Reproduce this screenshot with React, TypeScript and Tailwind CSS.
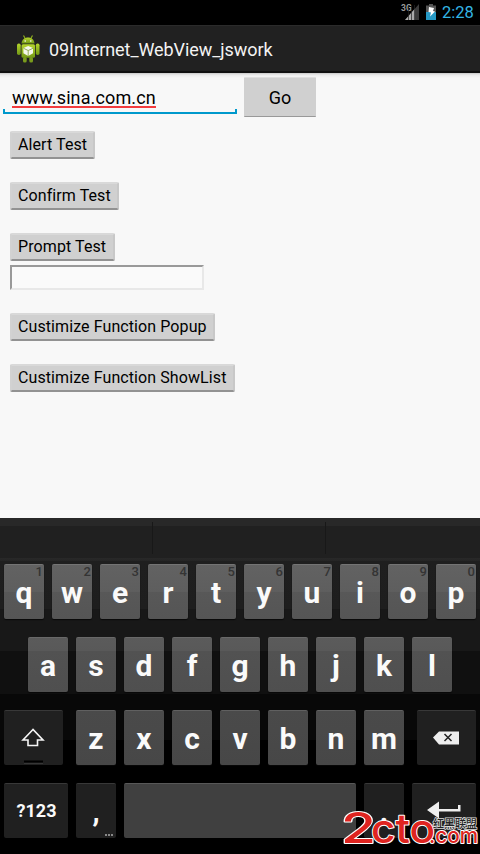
import React from "react";

type KeyProps = { label: string; hint?: string; tone: string };

const ROW1 = "bg-[linear-gradient(#626262,#5e5e5e_27px,#585858_27px,#555555)] border-t-[#747474]";
const ROW2 = "bg-[linear-gradient(#5b5b5b,#595959_13px,#525252_13px,#4f4f4f)] border-t-[#696969]";
const ROW3 = "bg-[linear-gradient(#4a4a4a,#474747)] border-t-[#606060]";

function Key({ label, hint, tone }: KeyProps) {
  return (
    <div className={`relative h-[55px] w-10 shrink-0 rounded-[2px] border-t shadow-[0_1px_1px_#080808] ${tone}`}>
      <div className="pt-[10px] text-center text-[30px] leading-[36px] font-bold text-[#fafafa]">{label}</div>
      {hint && <span className="absolute top-0 right-[1px] text-[13px] leading-[14px] font-medium text-[#343434]">{hint}</span>}
    </div>
  );
}

const dark = "relative h-[55px] shrink-0 rounded-[2px] border-t border-t-[#383838] bg-[#202020]";

function WebButton({ label, width }: { label: string; width: string }) {
  return (
    <button
      className={`block h-7 rounded-[2px] border-2 border-t-[#d9d9d9] border-r-[#c8c8c8] border-b-[#929292] border-l-[#d2d2d2] bg-[#d0d0d0] pb-px pl-[6px] text-left text-[16px] leading-[21px] tracking-[0.09px] whitespace-nowrap text-black ${width}`}
    >
      {label}
    </button>
  );
}

function AndroidIcon() {
  return (
    <svg className="ml-4 h-[30px] w-6" viewBox="0 0 24 30">
      <defs>
        <linearGradient id="robot" x1="0" y1="0" x2="0" y2="1">
          <stop offset="0" stopColor="#b6d62c" />
          <stop offset="1" stopColor="#719716" />
        </linearGradient>
      </defs>
      <path d="M7.500 1.500 9.500 5M16.500 1.500 14.500 5" stroke="#8dac20" strokeWidth="1.200" />
      <path d="M5.500 9.500C6 1.500 18 1.500 18.500 9.500Z" fill="url(#robot)" />
      <rect x="5.500" y="10.300" width="13.500" height="13.500" rx="1.500" fill="url(#robot)" />
      <rect x="1" y="9.500" width="3.700" height="11.500" rx="1.700" fill="url(#robot)" />
      <rect x="19.800" y="9.500" width="3.700" height="11.500" rx="1.700" fill="url(#robot)" />
      <rect x="7" y="23" width="3.700" height="5.500" rx="1.500" fill="#799b1c" />
      <rect x="13.300" y="23" width="3.700" height="5.500" rx="1.500" fill="#799b1c" />
      <circle cx="9.200" cy="7" r=".8" fill="#fff" />
      <circle cx="14.800" cy="7" r=".8" fill="#fff" />
      <path d="m12.200 12 4.800 2v5.200L12.200 22l-4.800-2.800V14Z" fill="#f5f7ec" />
      <path d="m7.500 14.300 4.700 2.200 4.800-2.200M12.200 16.500V22" fill="none" stroke="#7d9a35" strokeWidth=".8" />
    </svg>
  );
}

function Watermark() {
  return (
    <svg className="absolute top-[794px] left-[330px] h-[60px] w-[150px]" viewBox="-8 -10 150 60">
      <g fontFamily="Inter, sans-serif" fill="#df2420" stroke="#fff" strokeWidth="2" paintOrder="stroke" strokeLinejoin="round">
        <text x="3" y="39" fontSize="43" fontWeight="500" textLength="35" lengthAdjust="spacingAndGlyphs">2</text>
        <text x="33" y="39" fontSize="40" fontWeight="500" textLength="64" lengthAdjust="spacingAndGlyphs">cto</text>
        <text x="91" y="39" fontSize="21" fontWeight="500" textLength="49" lengthAdjust="spacingAndGlyphs">.com</text>
      </g>
      <text x="95" y="24" fontFamily="'Noto Sans CJK TC', sans-serif" fontSize="11" fontWeight="500" fill="#222" stroke="#ddd" strokeWidth="1.500" paintOrder="stroke" textLength="44">红黑联盟</text>
    </svg>
  );
}

export default function App() {
  return (
    <div className="relative flex h-[854px] w-[480px] flex-col overflow-hidden bg-[#f8f8f8] font-[Roboto,sans-serif]">
      <div className="flex h-[25px] items-start justify-end bg-black text-[#33b5e5]">
        <svg className="h-[25px] w-10" viewBox="0 0 40 25">
          <text x="1" y="11" fontFamily="Roboto" fontSize="8.500" fontWeight="700" fill="#999">3G</text>
          <path d="M5 20 19 4V20Z" fill="#3b3b3b" />
          <path d="M5 20 15 8.600V20Z" fill="#aaa" />
          <path d="M8.500 5v15M11.500 5v15M14.500 5v15" stroke="#222" strokeWidth=".7" />
          <path d="M29 4h4v1.500h3V20H26V5.500h3Z" fill="#555" />
          <path d="M26 12h10v8H26Z" fill="#2799c5" />
          <path d="m29 7 5 1-1 3 2 .5-5 5 1-4-2.500-.5Z" fill="#fff" />
        </svg>
        <span className="mr-[6px] ml-[2px] w-8 text-[16.500px] leading-[25px] whitespace-nowrap">2:28</span>
      </div>

      <header className="flex h-12 items-center border-t border-b-2 border-t-[#2b2b2b] border-b-[#101010] bg-[#212121]">
        <AndroidIcon />
        <h1 className="ml-[9px] pt-[3px] text-[18px] leading-6 font-normal tracking-[-0.06px] whitespace-nowrap text-[#f3f3f3]">09Internet_WebView_jswork</h1>
      </header>

      <div className="flex h-[45px] bg-[linear-gradient(#c8c8c8,#ececec_2px,#f8f8f8_5px)]">
        <div className="mt-1 ml-[3px] flex h-[37px] w-[234px] flex-col justify-end">
          <div className="ml-[9px] h-[23px] w-36 border-b-2 border-[#f33b3e] text-[18px] leading-[25px] tracking-[0.12px] whitespace-nowrap text-black">www.sina.com.cn</div>
          <div className="mt-px h-[5px] border-x-2 border-b-2 border-[#0099cc]" />
        </div>
        <button className="mt-[4px] ml-[7px] h-10 w-[72px] rounded-[1px] border-t border-b border-t-[#dedede] border-b-[#999] bg-[#d0d0d0] text-[18px] text-black">Go</button>
      </div>

      <main className="flex h-[400px] flex-col items-start pt-[13px] pl-[10px]">
        <WebButton label="Alert Test" width="w-[85px]" />
        <div className="mt-[23px]"><WebButton label="Confirm Test" width="w-[109px]" /></div>
        <div className="mt-[23px]"><WebButton label="Prompt Test" width="w-[105px]" /></div>
        <input aria-label="Prompt result" className="mt-[4px] block h-[25px] w-[194px] border-2 border-t-[#999] border-r-[#e8e8e8] border-b-[#e8e8e8] border-l-[#999] bg-[#fafafa]" />
        <div className="mt-[23px]"><WebButton label="Custimize Function Popup" width="w-[205px]" /></div>
        <div className="mt-[23px]"><WebButton label="Custimize Function ShowList" width="w-[225px]" /></div>
      </main>

      <section className="h-[336px] shrink-0 bg-[linear-gradient(#282828_8px,#202020_8px,#202020_40px,#282828_40px,#252525_43px,#1f1f1f_43px,#1e1e1e_91px,#181818_91px,#181818_133px,#101010_133px,#101010_176px,#080808_176px,#080808_222px,#000_222px)]">
        <div className="flex h-[46px] pt-1">
          <div className="h-8 w-[153px] border-r border-[#181818]" />
          <div className="h-8 w-[173px] border-r border-[#181818]" />
        </div>
        <div className="flex h-[73px] gap-2 pl-1">
          {"qwertyuiop".split("").map((c, i) => <Key key={c} label={c} hint={String((i + 1) % 10)} tone={ROW1} />)}
        </div>
        <div className="flex h-[73px] gap-2 pl-7">
          {"asdfghjkl".split("").map((c) => <Key key={c} label={c} tone={ROW2} />)}
        </div>
        <div className="flex h-[73px] pl-1">
          <div className={`${dark} mr-[13px] w-[59px]`}>
            <svg className="h-[54px] w-[59px]" viewBox="0 0 59 54">
              <path d="M29 18.500 19 29h5v5.500h9.500V29h5.500Z" fill="none" stroke="#f5f5f5" strokeWidth="1.600" />
              <path d="M20 50.500h19" stroke="#000" strokeWidth="2" />
              <path d="M20 52.500h19" stroke="#363636" />
            </svg>
          </div>
          <div className="flex gap-2">
            {"zxcvbnm".split("").map((c) => <Key key={c} label={c} tone={ROW3} />)}
          </div>
          <div className={`${dark} ml-[13px] w-[59px]`}>
            <svg className="h-[54px] w-[59px]" viewBox="0 0 59 54">
              <path d="m16 26.500 6-6h20v13H22Z" fill="#eee" />
              <path d="m27.500 23 7 7m0-7-7 7" stroke="#222" strokeWidth="1.500" />
            </svg>
          </div>
        </div>
        <div className="flex gap-2 pl-1">
          <div className={`${dark} w-16 pl-[1px] text-center text-[18px] leading-[54px] font-bold text-[#fafafa]`}>?123</div>
          <div className={`${dark} w-10 text-center text-[29px] leading-[56px] font-bold text-[#fafafa]`}>
            ,<span className="absolute right-[3px] bottom-[2px] flex gap-px">
              <i className="h-[2px] w-[2px] bg-[#888]" /><i className="h-[2px] w-[2px] bg-[#888]" /><i className="h-[2px] w-[2px] bg-[#888]" />
            </span>
          </div>
          <div className="h-[55px] w-[232px] rounded-[2px] border-t border-[#585858] bg-[#404040]" />
          <div className={`${dark} w-10 text-center text-[29px] leading-[56px] font-bold text-[#fafafa]`}>.</div>
          <div className={`${dark} w-16`}>
            <svg className="h-[54px] w-16" viewBox="0 0 64 54">
              <path d="m15 26 12-8.500V25h19v-4h2.500v6.500H27v7Z" fill="#eee" />
            </svg>
          </div>
        </div>
      </section>
      <Watermark />
    </div>
  );
}
